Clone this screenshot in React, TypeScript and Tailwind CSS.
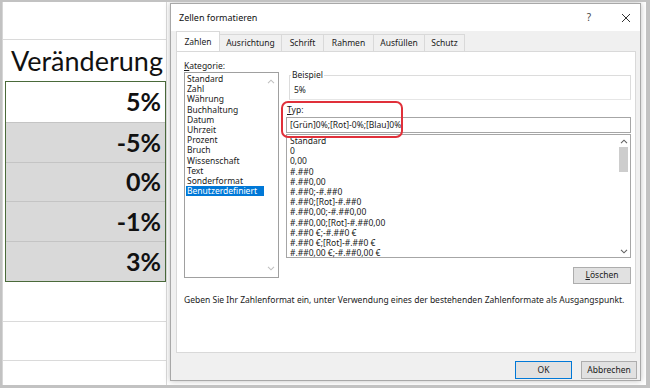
import React from "react";

const ui = { fontFamily: '"Noto Sans", "Open Sans", sans-serif' };
const sheetFont = { fontFamily: 'Lato, "Open Sans", sans-serif' };

function Chevron({ dir, color = "#606060" }: { dir: "up" | "down"; color?: string }) {
  return (
    <svg width="8" height="5" viewBox="0 0 8 5">
      {dir === "up" ? (
        <polyline points="1,4.2 4,1.2 7,4.2" fill="none" stroke={color} strokeWidth="1.1" />
      ) : (
        <polyline points="1,0.8 4,3.8 7,0.8" fill="none" stroke={color} strokeWidth="1.1" />
      )}
    </svg>
  );
}

const categories = [
  "Standard",
  "Zahl",
  "Währung",
  "Buchhaltung",
  "Datum",
  "Uhrzeit",
  "Prozent",
  "Bruch",
  "Wissenschaft",
  "Text",
  "Sonderformat",
  "Benutzerdefiniert",
];

const formats = [
  "Standard",
  "0",
  "0,00",
  "#.##0",
  "#.##0,00",
  "#.##0;-#.##0",
  "#.##0;[Rot]-#.##0",
  "#.##0,00;-#.##0,00",
  "#.##0,00;[Rot]-#.##0,00",
  "#.##0 €;-#.##0 €",
  "#.##0 €;[Rot]-#.##0 €",
  "#.##0,00 €;-#.##0,00 €",
];

const tabs = [
  { label: "Zahlen", w: "w-[44px]" },
  { label: "Ausrichtung", w: "w-[62px]" },
  { label: "Schrift", w: "w-[42px]" },
  { label: "Rahmen", w: "w-[50px]" },
  { label: "Ausfüllen", w: "w-[51px]" },
  { label: "Schutz", w: "w-[40px]" },
];

function Sheet() {
  const values = ["5%", "-5%", "0%", "-1%", "3%"];
  return (
    <div className="flex h-full w-full bg-white">
      <div className="w-[1px] bg-[#d6d6d6]" />
      <div className="flex w-[164px] flex-col border-r border-[#dadada]" style={sheetFont}>
        <div className="h-[38px] border-b border-[#dadada]" />
        <div className="flex h-[41px] items-center pl-[8px] text-[27px] leading-none text-[#111]">
          Veränderung
        </div>
        <div className="ml-[2px] flex flex-col border-[1.5px] border-[#4a6a3a]">
          {values.map((v, i) => (
            <div
              key={v}
              className={`flex h-[39.8px] items-center justify-end pr-[4px] text-[25px] font-bold leading-none text-[#111] ${
                i === 0 ? "bg-white" : "bg-[#d9d9d9] border-t border-[#c4c4c4]"
              }`}
            >
              {v}
            </div>
          ))}
        </div>
        <div className="h-[40px] border-b border-[#dadada]" />
        <div className="h-[39px] border-b border-[#dadada]" />
        <div className="flex-1" />
      </div>
      <div className="flex-1" />
    </div>
  );
}

function Dialog() {
  return (
    <div
      className="absolute left-[168px] top-[1px] flex h-[378px] w-[471px] flex-col border border-[#a8a8a8] bg-[#f0f0f0] text-[8.5px] text-[#1a1a1a] shadow-[0_0_6px_rgba(0,0,0,0.25)]"
      style={ui}
    >
      {/* title bar */}
      <div className="flex h-[27px] items-center bg-white pl-[8px]">
        <span className="text-[9px] text-[#111]">Zellen formatieren</span>
        <div className="flex-1" />
        <span className="mr-[30px] text-[10px] text-[#444]">?</span>
        <svg width="10" height="10" viewBox="0 0 10 10" className="mr-[9px]">
          <path d="M1 1 L9 9 M9 1 L1 9" stroke="#333" strokeWidth="1" />
        </svg>
      </div>

      {/* tabs */}
      <div className="flex h-[20px] items-end pl-[5px] pt-[1px]">
        {tabs.map((t, i) => (
          <div
            key={t.label}
            className={`flex items-center justify-center border border-[#d9d9d9] ${t.w} ${
              i === 0
                ? "relative z-10 h-[20px] border-b-0 bg-white pt-[1px]"
                : "h-[17px] border-b-0 border-l-0 bg-[#f0f0f0] pt-[1px]"
            }`}
          >
            {t.label}
          </div>
        ))}
      </div>

      {/* panel */}
      <div className="ml-[5px] mr-[4px] flex h-[302px] flex-col border border-[#d9d9d9] bg-white pl-[7px] pr-[4px]">
        <div className="flex">
          {/* left column */}
          <div className="flex w-[96px] flex-col">
            <div className="mt-[8px] h-[12px] leading-[12px]">
              <span className="underline">K</span>ategorie:
            </div>
            <div className="relative h-[206px] w-[95px] border border-[#a0a0a0] pl-[1px] pt-[1px]">
              {categories.map((c) => (
                <div
                  key={c}
                  className={`h-[10.2px] pl-[1px] leading-[10.2px] ${
                    c === "Benutzerdefiniert" ? "w-[78px] bg-[#0078d7] text-white" : ""
                  }`}
                >
                  {c}
                </div>
              ))}
              <div className="absolute right-[3px] top-[6px]">
                <Chevron dir="up" color="#c0c0c0" />
              </div>
              <div className="absolute bottom-[6px] right-[3px]">
                <Chevron dir="down" color="#c0c0c0" />
              </div>
            </div>
          </div>

          {/* right column */}
          <div className="ml-[6px] flex flex-1 flex-col pt-[23px]">
            {/* Beispiel group */}
            <div className="relative ml-[3px] h-[25px] border border-[#dcdcdc] border-b-[#e6e6e6]">
              <span className="absolute -top-[7px] left-[1px] bg-white px-[1px] leading-[12px]">Beispiel</span>
              <div className="pl-[4px] pt-[8px] leading-[12px]">5%</div>
            </div>
            <div className="mt-[3px] h-[14px] pl-[1px] leading-[13px]">
              <span className="underline">T</span>yp:
            </div>
            <div className="h-[16px] border border-[#a6a6a6] pl-[3px] leading-[14px]">
              [Grün]0%;[Rot]-0%;[Blau]0%
            </div>
            {/* format list */}
            <div className="mt-[1px] flex h-[124px] border border-[#a6a6a6]">
              <div className="flex-1 pl-[3px] pt-[1px]">
                {formats.map((f) => (
                  <div key={f} className="h-[10.2px] whitespace-nowrap leading-[10.2px]">
                    {f}
                  </div>
                ))}
              </div>
              <div className="flex w-[13px] flex-col items-center">
                <div className="flex h-[12px] items-center">
                  <Chevron dir="up" />
                </div>
                <div className="h-[25px] w-[9px] bg-[#cdcdcd]" />
                <div className="flex-1" />
                <div className="flex h-[12px] items-center">
                  <Chevron dir="down" />
                </div>
              </div>
            </div>
            <div className="mt-[9px] flex justify-end">
              <div className="flex h-[17px] w-[58px] items-center justify-center border border-[#adadad] bg-[#e1e1e1]">
                <span className="underline">L</span>öschen
              </div>
            </div>
          </div>
        </div>
        <div className="mt-[10px] whitespace-nowrap leading-[12px]">
          Geben Sie Ihr Zahlenformat ein, unter Verwendung eines der bestehenden Zahlenformate als Ausgangspunkt.
        </div>
      </div>

      {/* buttons */}
      <div className="mr-[3px] mt-[8px] flex justify-end gap-[9px]">
        <div className="flex h-[18px] w-[57px] items-center justify-center border-[1.5px] border-[#0078d7] bg-[#e1e1e1]">
          OK
        </div>
        <div className="flex h-[18px] w-[56px] items-center justify-center border border-[#adadad] bg-[#e1e1e1]">
          Abbrechen
        </div>
      </div>

      {/* red highlight */}
      <div className="pointer-events-none absolute left-[110px] top-[97px] h-[37px] w-[122px] rounded-[7px] border-[2px] border-[#e0303a]" />
    </div>
  );
}

export default function App() {
  return (
    <div className="relative h-[388px] w-[650px] overflow-hidden border-[2px] border-r-[4px] border-b-[3px] border-[#c2c2c2] bg-white">
      <Sheet />
      <Dialog />
    </div>
  );
}
